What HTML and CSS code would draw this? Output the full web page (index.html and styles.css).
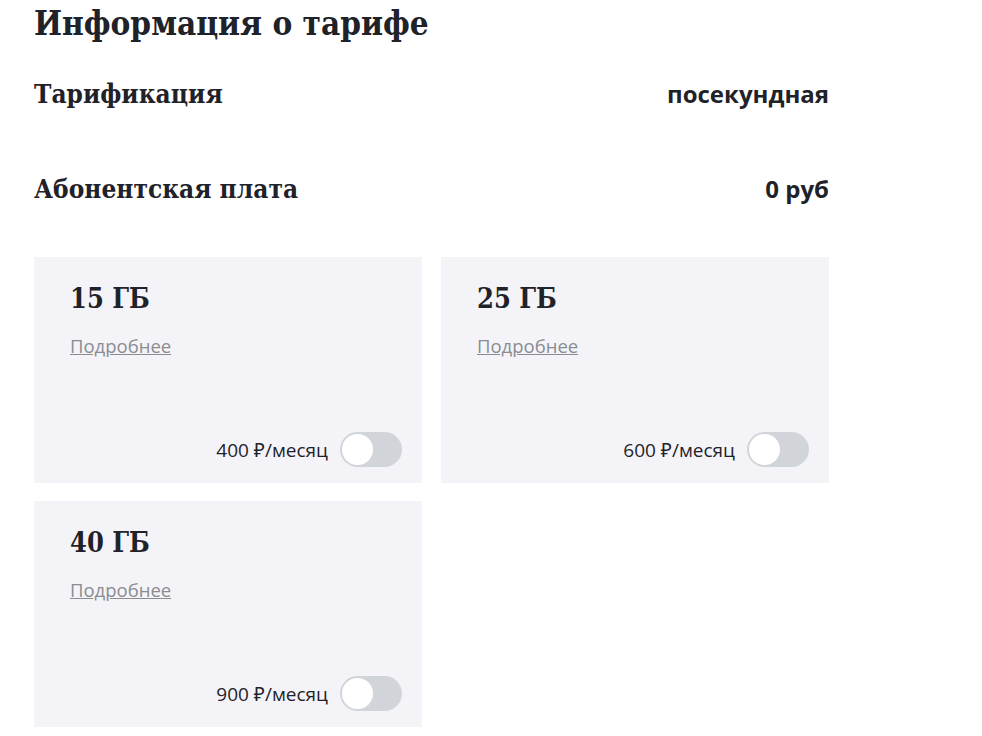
FILE: index.html
```html
<!DOCTYPE html>
<html lang="ru">
<head>
    <meta charset="UTF-8">
    <meta name="viewport" content="width=device-width, initial-scale=1.0">
    <title>Информация о тарифе</title>
    <link rel="stylesheet" href="styles.css">
</head>

<body>
    <div class="page">
        <h1 class="title">Информация о тарифе</h1>

        <div class="row">
            <span class="row-name">Тарификация</span>
            <span class="row-value">посекундная</span>
        </div>
        <div class="row">
            <span class="row-name">Абонентская плата</span>
            <span class="row-value">0 руб</span>
        </div>

        <div class="cards">
            <div class="card">
                <div class="card-title">15 ГБ</div>
                <a class="more" href="#">Подробнее</a>
                <div class="card-bottom">
                    <span class="price">400 ₽/месяц</span>
                    <span class="toggle"><span class="knob"></span></span>
                </div>
            </div>
            <div class="card">
                <div class="card-title">25 ГБ</div>
                <a class="more" href="#">Подробнее</a>
                <div class="card-bottom">
                    <span class="price">600 ₽/месяц</span>
                    <span class="toggle"><span class="knob"></span></span>
                </div>
            </div>
            <div class="card">
                <div class="card-title">40 ГБ</div>
                <a class="more" href="#">Подробнее</a>
                <div class="card-bottom">
                    <span class="price">900 ₽/месяц</span>
                    <span class="toggle"><span class="knob"></span></span>
                </div>
            </div>
        </div>
    </div>
</body>
</html>
```

FILE: styles.css
```css
body {
    margin: 0;
    background: #fff;
    color: #1f2229;
    font-family: "Open Sans", "Noto Sans", sans-serif;
}

.page {
    width: 795px;
    padding-left: 34px;
}

.title {
    font-family: "DejaVu Serif Condensed", "DejaVu Serif", serif;
    font-stretch: condensed;
    font-size: 33px;
    font-weight: bold;
    margin: 2px 0 0;
    line-height: 44px;
}

.row {
    display: flex;
    justify-content: space-between;
    align-items: baseline;
    height: 95px;
    padding-top: 31px;
    box-sizing: border-box;
}

.row-name {
    font-family: "DejaVu Serif Condensed", "DejaVu Serif", serif;
    font-stretch: condensed;
    font-size: 26px;
    font-weight: bold;
}

.row-value {
    font-size: 24px;
    font-weight: bold;
}

.cards {
    display: grid;
    grid-template-columns: 388px 388px;
    column-gap: 19px;
    row-gap: 18px;
    margin-top: 21px;
}

.card {
    background: #f4f4f8;
    height: 226px;
    box-sizing: border-box;
    padding: 26px 20px 16px 36px;
    display: flex;
    flex-direction: column;
}

.card-title {
    font-family: "DejaVu Serif Condensed", "DejaVu Serif", serif;
    font-stretch: condensed;
    font-size: 27px;
    font-weight: bold;
    line-height: 32px;
}

.more {
    color: #8a8c92;
    font-size: 18.5px;
    margin-top: 18px;
    align-self: flex-start;
}

.card-bottom {
    margin-top: auto;
    display: flex;
    justify-content: flex-end;
    align-items: center;
    gap: 12px;
}

.price {
    font-size: 19px;
}

.toggle {
    width: 62px;
    height: 35px;
    border-radius: 18px;
    background: #d1d5d9;
    position: relative;
}

.knob {
    position: absolute;
    left: 2px;
    top: 2px;
    width: 31px;
    height: 31px;
    border-radius: 50%;
    background: #fff;
}
```
